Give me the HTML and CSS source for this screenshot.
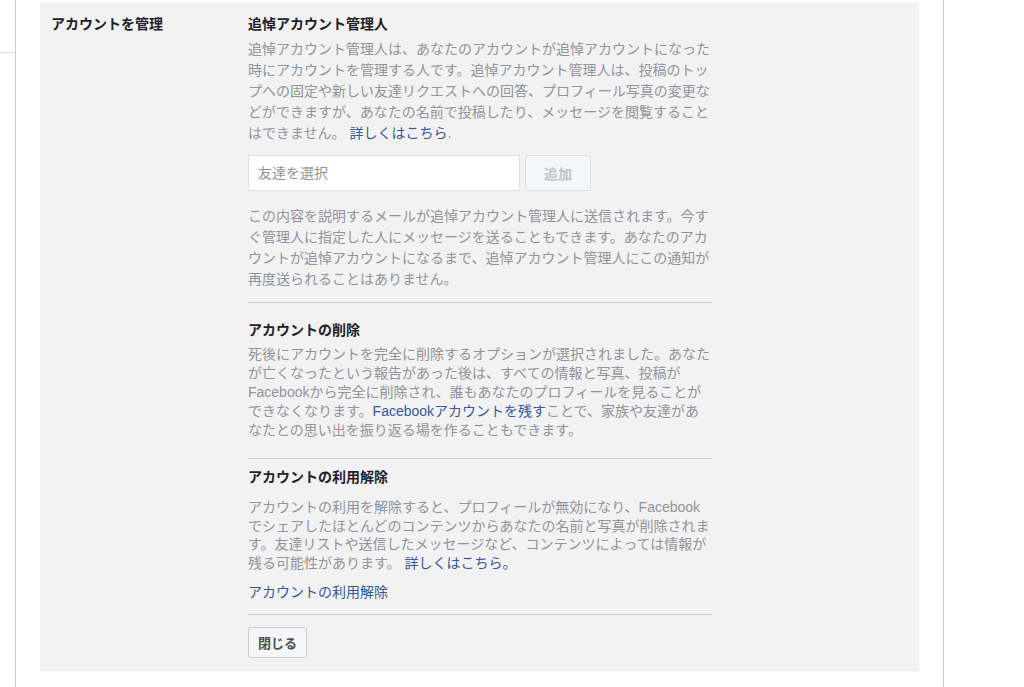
FILE: index.html
```html
<!DOCTYPE html>
<html lang="ja">
<head>
    <meta charset="UTF-8">
    <meta name="viewport" content="width=device-width, initial-scale=1.0">
    <title>アカウントを管理</title>
    <link rel="stylesheet" href="styles.css">
</head>
<body>
    <div class="shell">
        <div class="side"></div>
        <div class="main">
            <div class="panel">
                <div class="label">アカウントを管理</div>
                <div class="content">
                    <h3 class="title">追悼アカウント管理人</h3>
                    <p class="text text-first">追悼アカウント管理人は、あなたのアカウントが追悼アカウントになった時にアカウントを管理する人です。追悼アカウント管理人は、投稿のトップへの固定や新しい友達リクエストへの回答、プロフィール写真の変更などができますが、あなたの名前で投稿したり、メッセージを閲覧することはできません。 <a href="#">詳しくはこちら</a>.</p>

                    <div class="picker">
                        <input type="text" class="picker-input" placeholder="友達を選択">
                        <button class="btn btn-add" disabled>追加</button>
                    </div>

                    <p class="text text-mail">この内容を説明するメールが追悼アカウント管理人に送信されます。今すぐ管理人に指定した人にメッセージを送ることもできます。あなたのアカウントが追悼アカウントになるまで、追悼アカウント管理人にこの通知が再度送られることはありません。</p>

                    <div class="block block-delete">
                        <h3 class="title">アカウントの削除</h3>
                        <p class="text text-delete">死後にアカウントを完全に削除するオプションが選択されました。あなたが亡くなったという報告があった後は、すべての情報と写真、投稿がFacebookから完全に削除され、誰もあなたのプロフィールを見ることができなくなります。<a href="#">Facebookアカウントを残す</a>ことで、家族や友達があなたとの思い出を振り返る場を作ることもできます。</p>
                    </div>

                    <div class="block block-deactivate">
                        <h3 class="title">アカウントの利用解除</h3>
                        <p class="text text-deactivate">アカウントの利用を解除すると、プロフィールが無効になり、Facebookでシェアしたほとんどのコンテンツからあなたの名前と写真が削除されます。友達リストや送信したメッセージなど、コンテンツによっては情報が残る可能性があります。 <a href="#">詳しくはこちら。</a></p>
                        <a href="#" class="action-link">アカウントの利用解除</a>
                    </div>

                    <div class="block block-close">
                        <button class="btn btn-close">閉じる</button>
                    </div>
                </div>
            </div>

            <div class="row">
                <div class="label">ログイン</div>
                <div class="row-text">アカウントの所有者と管理者の設定を確認してください</div>
            </div>
        </div>
    </div>
</body>
</html>
```

FILE: styles.css
```css
*{
    margin: 0px;
    padding: 0px;
    box-sizing: border-box;
}
body{
    font-family: "Liberation Sans", "Noto Sans CJK JP", sans-serif;
    font-size: 14px;
    color: #1d2129;
    background-color: #fff;
    overflow: hidden;
}
a{
    color: #365899;
    text-decoration: none;
}
.shell{
    display: flex;
    min-height: 100vh;
}
.side{
    width: 15px;
    height: 53px;
    border-bottom: 1px solid #dddfe2;
}
.main{
    width: 929px;
    border-left: 1px solid #ccc;
    border-right: 1px solid #ccc;
    padding: 2px 24px 0px 24px;
}

/* panel */
.panel{
    display: grid;
    grid-template-columns: 197px 464px;
    background-color: #f2f2f2;
    border-bottom: 1px solid #e9ebee;
    padding: 12px 11px 12px 11px;
}
.label{
    font-weight: bold;
    line-height: 20px;
}
.title{
    font-size: 14px;
    font-weight: bold;
    line-height: 20px;
    color: #1d2129;
}
.text{
    color: #90949c;
}
.text-first{
    margin-top: 5px;
    line-height: 21px;
}
.picker{
    display: flex;
    gap: 5px;
    margin-top: 11px;
}
.picker-input{
    width: 272px;
    height: 36px;
    border: 1px solid #dddfe2;
    background-color: #fff;
    padding: 0px 9px;
    font-family: inherit;
    font-size: 14px;
    color: #1d2129;
    outline: none;
}
.picker-input::placeholder{
    color: #90949c;
}
.btn{
    font-family: inherit;
    font-weight: bold;
    border-radius: 2px;
    background-color: #f5f6f7;
    cursor: pointer;
}
.btn-add{
    width: 66px;
    height: 36px;
    font-size: 14px;
    color: #bec3c9;
    border: 1px solid #dddfe2;
    cursor: default;
}
.text-mail{
    margin-top: 15px;
    line-height: 21px;
}
.block{
    border-top: 1px solid #ccd0d5;
}
.block-delete{
    margin-top: 12px;
    padding-top: 17px;
}
.text-delete{
    margin-top: 5px;
    line-height: 19px;
}
.block-deactivate{
    margin-top: 18px;
    padding-top: 8px;
}
.text-deactivate{
    margin-top: 11px;
    line-height: 18.5px;
}
.action-link{
    display: block;
    margin-top: 10px;
    line-height: 20px;
}
.block-close{
    margin-top: 12px;
    padding-top: 12px;
}
.btn-close{
    height: 31px;
    padding: 0px 9px;
    font-size: 13px;
    color: #4b4f56;
    border: 1px solid #ccd0d5;
}

/* next row, cut by the window */
.row{
    display: grid;
    grid-template-columns: 218px 1fr;
    padding: 14px 0px 0px 17px;
    line-height: 20px;
}
.row-text{
    color: #90949c;
}
```
